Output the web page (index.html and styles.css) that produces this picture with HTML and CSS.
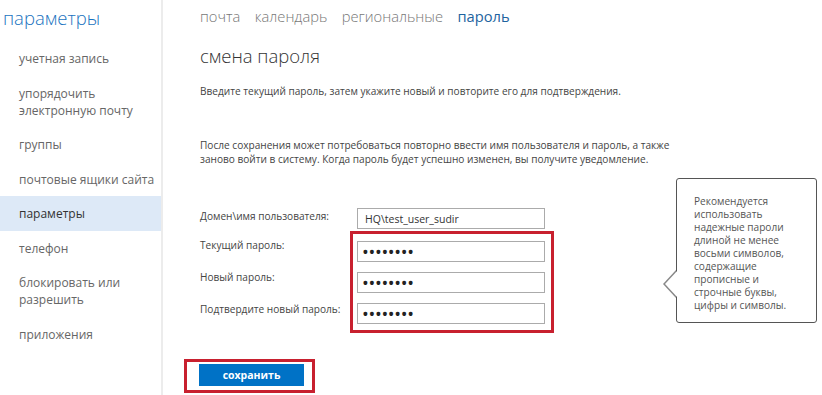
FILE: index.html
```html
<!DOCTYPE html>
<html lang="ru">
<head>
  <meta charset="UTF-8">
  <title>параметры</title>
  <link rel="stylesheet" href="styles.css">
</head>
<body>

  <div class="page">
    <div class="sidebar">
      <div class="sidebar-title">параметры</div>
      <ul class="menu">
        <li>учетная запись</li>
        <li>упорядочить<br>электронную почту</li>
        <li>группы</li>
        <li>почтовые ящики сайта</li>
        <li class="active">параметры</li>
        <li>телефон</li>
        <li>блокировать или<br>разрешить</li>
        <li>приложения</li>
      </ul>
    </div>

    <div class="main">
      <div class="tabs">
        <a href="#">почта</a>
        <a href="#">календарь</a>
        <a href="#">региональные</a>
        <a href="#" class="current">пароль</a>
      </div>

      <h2>смена пароля</h2>
      <p class="intro">Введите текущий пароль, затем укажите новый и повторите его для подтверждения.</p>
      <p class="note">После сохранения может потребоваться повторно ввести имя пользователя и пароль, а также<br>заново войти в систему. Когда пароль будет успешно изменен, вы получите уведомление.</p>

      <div class="form">
        <label class="user-label">Домен\имя пользователя:</label>
        <div class="user-field">
          <input type="text" value="HQ\test_user_sudir">
        </div>

        <div class="labels">
          <label>Текущий пароль:</label>
          <label>Новый пароль:</label>
          <label>Подтвердите новый пароль:</label>
        </div>
        <div class="mark fields">
          <input type="password" value="12345678">
          <input type="password" value="12345678">
          <input type="password" value="12345678">
        </div>
      </div>

      <div class="mark save-box">
        <button>сохранить</button>
      </div>

      <div class="tip">
        Рекомендуется использовать надежные пароли длиной не менее восьми символов, содержащие прописные и строчные буквы, цифры и символы.
      </div>
    </div>
  </div>

</body>
</html>
```

FILE: styles.css
```css
body {
  font-family: "Open Sans", "Noto Sans", sans-serif;
  background-color: white;
  color: #333;
  margin: 0;
  padding: 0;
}

.page {
  display: flex;
  height: 395px;
  overflow: hidden;
}

.sidebar {
  width: 161px;
  flex-shrink: 0;
  border-right: 2px solid #ececec;
}

.sidebar-title {
  color: #1a73c0;
  font-size: 18.5px;
  font-weight: 300;
  padding: 4px 0 0 3px;
  height: 37px;
  line-height: 27px;
}

.menu {
  list-style: none;
  margin: 0;
  padding: 0;
}

.menu li {
  color: #666;
  font-size: 12px;
  line-height: 17px;
  padding: 9px 0 8.5px 19px;
}

.menu li.active {
  background-color: #dde9f7;
  color: #333;
}

.main {
  position: relative;
  flex: 1;
  padding-left: 37px;
}

.tabs {
  display: flex;
  gap: 14.5px;
  margin-top: 5px;
}

.tabs a {
  color: #777;
  text-decoration: none;
  font-size: 14.7px;
  font-weight: 300;
  line-height: 22px;
}

.tabs a.current {
  color: #1e64a0;
  font-weight: normal;
}

h2 {
  font-size: 18.5px;
  font-weight: 300;
  color: #333;
  margin: 15px 0 0;
  line-height: 28px;
}

.intro, .note {
  font-size: 10.1px;
  line-height: 14px;
  color: #444;
  margin: 0;
}

.intro {
  margin-top: 14px;
}

.note {
  margin-top: 40px;
}

.form {
  display: grid;
  grid-template-columns: 150px auto;
  margin-top: 42px;
  font-size: 10.1px;
  color: #444;
}

.user-label {
  line-height: 17px;
}

.user-field {
  padding-left: 7px;
}

.labels {
  display: flex;
  flex-direction: column;
  gap: 11px;
  padding-top: 6px;
}

.labels label {
  line-height: 21px;
}

input {
  box-sizing: border-box;
  width: 188px;
  height: 21px;
  border: 1px solid #ababab;
  padding: 0 7px;
  font-family: "Open Sans", "Noto Sans", sans-serif;
  font-size: 10.5px;
  color: #333;
  display: block;
}

input[type="password"] {
  font-size: 18px;
  letter-spacing: -0.3px;
  padding: 0 4px;
  color: #222;
}

.mark {
  border: 3px solid #c8202f;
  width: fit-content;
}

.fields {
  margin-top: 2px;
  padding: 7px 6px 6px 4px;
  display: flex;
  flex-direction: column;
  gap: 10px;
}

.save-box {
  margin: 26px 0 0 -16px;
  padding: 2px 8px 4px 12px;
}

button {
  display: block;
  width: 105px;
  height: 22px;
  background-color: #0072c6;
  color: white;
  font-family: "Open Sans", "Noto Sans", sans-serif;
  font-weight: bold;
  font-size: 10.5px;
  border: none;
  padding: 0;
  cursor: pointer;
}

.tip {
  position: absolute;
  left: 513px;
  top: 178px;
  box-sizing: border-box;
  width: 141px;
  height: 145px;
  border: 1px solid #555;
  border-radius: 3px;
  background-color: white;
  padding: 16px 20px 0 17px;
  font-size: 10.1px;
  line-height: 13px;
  color: #555;
}

.tip::before,
.tip::after {
  content: "";
  position: absolute;
  top: 91px;
  border-top: 14px solid transparent;
  border-bottom: 14px solid transparent;
}

.tip::before {
  left: -14px;
  border-right: 13px solid #888;
}

.tip::after {
  left: -12px;
  border-right: 13px solid white;
}
```
